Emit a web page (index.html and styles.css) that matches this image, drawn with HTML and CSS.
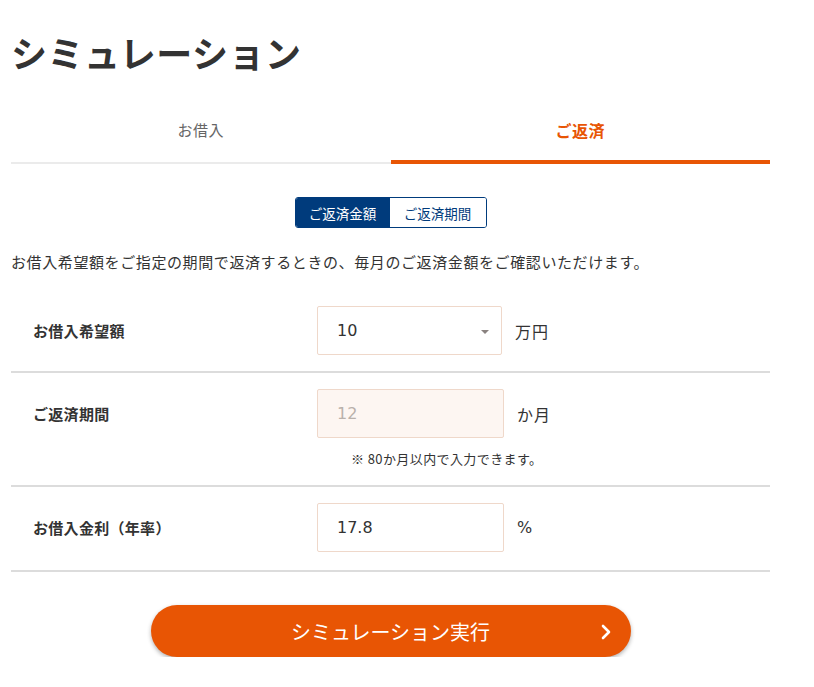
FILE: index.html
```html
<!DOCTYPE html>
<html lang="ja">
<head>
<meta charset="utf-8">
<title>シミュレーション</title>
<link rel="stylesheet" href="styles.css">
</head>
<body>
<main class="page">
  <h1 class="title">シミュレーション</h1>
  <nav class="tabs">
    <div class="tab">お借入</div>
    <div class="tab tab-active">ご返済</div>
  </nav>
  <div class="toggle-wrap">
    <div class="toggle">
      <span class="toggle-btn toggle-on">ご返済金額</span>
      <span class="toggle-btn">ご返済期間</span>
    </div>
  </div>
  <p class="desc">お借入希望額をご指定の期間で返済するときの、毎月のご返済金額をご確認いただけます。</p>
  <section class="form">
    <div class="row">
      <div class="label">お借入希望額</div>
      <div class="field">
        <div class="control">
          <div class="input select-box">
            <span>10</span>
            <span class="caret"></span>
          </div>
          <span class="unit">万円</span>
        </div>
      </div>
    </div>
    <div class="row">
      <div class="label">ご返済期間</div>
      <div class="field">
        <div class="control">
          <div class="input input-wide input-disabled">12</div>
          <span class="unit">か月</span>
        </div>
        <p class="note">※ 80か月以内で入力できます。</p>
      </div>
    </div>
    <div class="row">
      <div class="label">お借入金利（年率）</div>
      <div class="field">
        <div class="control">
          <div class="input input-wide">17.8</div>
          <span class="unit unit-num">%</span>
        </div>
      </div>
    </div>
  </section>
  <div class="action">
    <button class="run-btn" type="button">
      <span>シミュレーション実行</span>
      <svg class="chev" width="10" height="16" viewBox="0 0 10 16" aria-hidden="true">
        <path d="M2 2 L8 8 L2 14" fill="none" stroke="#fff" stroke-width="2.6" stroke-linecap="round" stroke-linejoin="round"/>
      </svg>
    </button>
  </div>
</main>
</body>
</html>
```

FILE: styles.css
```css
* { box-sizing: border-box; }
html, body { margin: 0; padding: 0; background: #fff; }
body {
  font-family: "Noto Sans CJK JP", "Noto Sans", "Liberation Sans", sans-serif;
  color: #333;
}
.page {
  width: 759px;
  margin-left: 11px;
}
.title {
  margin: 0;
  padding-top: 27px;
  font-size: 36px;
  line-height: 50px;
  font-weight: 700;
  color: #333;
  letter-spacing: 0.5px;
}
.tabs {
  display: flex;
  align-items: flex-end;
  margin-top: 41px;
}
.tab {
  flex: 1;
  text-align: center;
  font-size: 15px;
  letter-spacing: 0.5px;
  line-height: 24px;
  color: #666;
  padding-bottom: 20px;
  border-bottom: 2px solid #ebebeb;
}
.tab-active {
  color: #e85504;
  font-weight: 700;
  font-size: 16px;
  padding-bottom: 18px;
  border-bottom: 4px solid #e85504;
}
.toggle-wrap {
  display: flex;
  justify-content: center;
  margin-top: 33px;
}
.toggle {
  display: flex;
  border: 1px solid #003b7c;
  border-radius: 3px;
  overflow: hidden;
  height: 31px;
}
.toggle-btn {
  display: flex;
  align-items: center;
  justify-content: center;
  width: 96px;
  font-size: 13.5px;
  color: #003b7c;
  background: #fff;
}
.toggle-on {
  width: 94px;
  background: #003b7c;
  color: #fff;
}
.desc {
  margin: 24px 0 0;
  font-size: 15px;
  letter-spacing: 0.6px;
  line-height: 20px;
  color: #333;
}
.form { margin-top: 17px; }
.row {
  display: flex;
  border-bottom: 2px solid #dcdcdc;
  padding: 17px 0 16px;
}
.row + .row { padding-top: 16px; }
.row:last-child { padding-bottom: 18px; }
.label {
  width: 306px;
  padding-left: 22px;
  height: 49px;
  display: flex;
  align-items: center;
  font-size: 15px;
  letter-spacing: 0.3px;
  font-weight: 700;
  color: #333;
}
.field { display: flex; flex-direction: column; }
.control {
  display: flex;
  align-items: center;
  gap: 13px;
}
.input {
  width: 185px;
  height: 49px;
  border: 1px solid #efd8ca;
  border-radius: 2px;
  background: #fff;
  padding-left: 19px;
  display: flex;
  align-items: center;
  font-size: 16px;
  color: #333;
  font-family: "DejaVu Sans", "Noto Sans CJK JP", sans-serif;
}
.input-wide { width: 187px; }
.input-disabled {
  background: #fdf6f2;
  color: #b9b1ab;
}
.select-box {
  justify-content: space-between;
  padding-right: 12px;
}
.caret {
  width: 0;
  height: 0;
  border-left: 4px solid transparent;
  border-right: 4px solid transparent;
  border-top: 4px solid #8a8280;
  margin-top: 2px;
}
.unit {
  font-size: 16px;
  letter-spacing: 1px;
  color: #333;
}
.unit-num {
  font-family: "DejaVu Sans", sans-serif;
  letter-spacing: 0;
}
.note {
  margin: 11px 0 0;
  padding-left: 34px;
  font-size: 13px;
  letter-spacing: 0.4px;
  line-height: 20px;
  color: #333;
}
.action {
  display: flex;
  justify-content: center;
  margin-top: 33px;
}
.run-btn {
  position: relative;
  width: 480px;
  height: 52px;
  border: none;
  border-radius: 26px;
  background: #e85504;
  color: #fff;
  font-family: "Noto Sans CJK JP", "Noto Sans", sans-serif;
  font-size: 20px;
  box-shadow: 0 2px 4px rgba(0, 0, 0, 0.3);
  display: flex;
  align-items: center;
  justify-content: center;
  cursor: pointer;
}
.chev {
  position: absolute;
  right: 20px;
  top: 19px;
}
```
